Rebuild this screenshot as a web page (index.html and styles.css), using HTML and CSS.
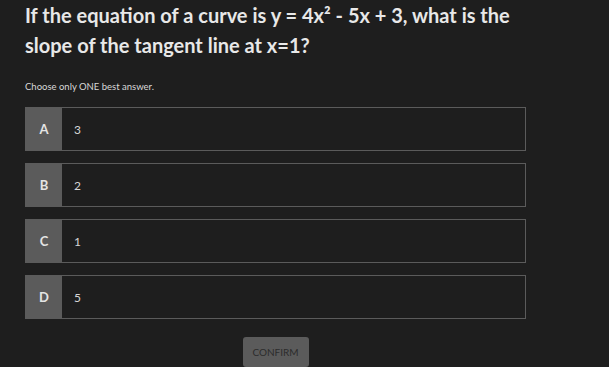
FILE: index.html
```html
<!DOCTYPE html>
<html>
<head>
<meta charset="utf-8">
<link rel="stylesheet" href="styles.css">
</head>
<body>
<main class="quiz">
  <h1 class="question">If the equation of a curve is y = 4x² - 5x + 3, what is the slope of the tangent line at x=1?</h1>
  <p class="hint">Choose only ONE best answer.</p>
  <div class="answers">
    <div class="options">
      <div class="option"><span class="letter">A</span><span class="value">3</span></div>
      <div class="option"><span class="letter">B</span><span class="value">2</span></div>
      <div class="option"><span class="letter">C</span><span class="value">1</span></div>
      <div class="option"><span class="letter">D</span><span class="value">5</span></div>
    </div>
    <div class="actions"><button class="confirm">CONFIRM</button></div>
  </div>
</main>
</body>
</html>
```

FILE: styles.css
```css
html, body {
  margin: 0;
  padding: 0;
  background: #1e1e1e;
}
body {
  font-family: "Lato", "Liberation Sans", sans-serif;
  color: #e6e6e6;
}
.quiz {
  padding: 0 25px;
}
.question {
  margin: 0;
  padding-top: 0;
  font-size: 20px;
  line-height: 30px;
  font-weight: 700;
  color: #e8e8e8;
  width: 500px;
}
.hint {
  margin: 20px 0 13px;
  font-size: 9.5px;
  line-height: 14px;
  color: #d8d8d8;
}
.answers {
  width: 501px;
}
.options {
  display: flex;
  flex-direction: column;
  gap: 12px;
}
.option {
  display: flex;
  height: 44px;
  box-sizing: border-box;
  border: 1px solid #5b5b5b;
  background: #1e1e1e;
}
.letter {
  width: 36px;
  background: #5b5b5b;
  display: flex;
  align-items: center;
  justify-content: center;
  font-size: 13px;
  font-weight: 700;
  color: #e4e4e4;
}
.value {
  display: flex;
  align-items: center;
  padding-left: 12px;
  font-size: 12px;
  color: #d6d6d6;
}
.actions {
  display: flex;
  justify-content: center;
  margin-top: 18px;
}
.confirm {
  width: 66px;
  height: 30px;
  border: none;
  border-radius: 3px;
  background: #5b5b5b;
  color: #2c2c2c;
  font-family: "Lato", "Liberation Sans", sans-serif;
  font-size: 10px;
  font-weight: 400;
  padding: 0;
}
```
